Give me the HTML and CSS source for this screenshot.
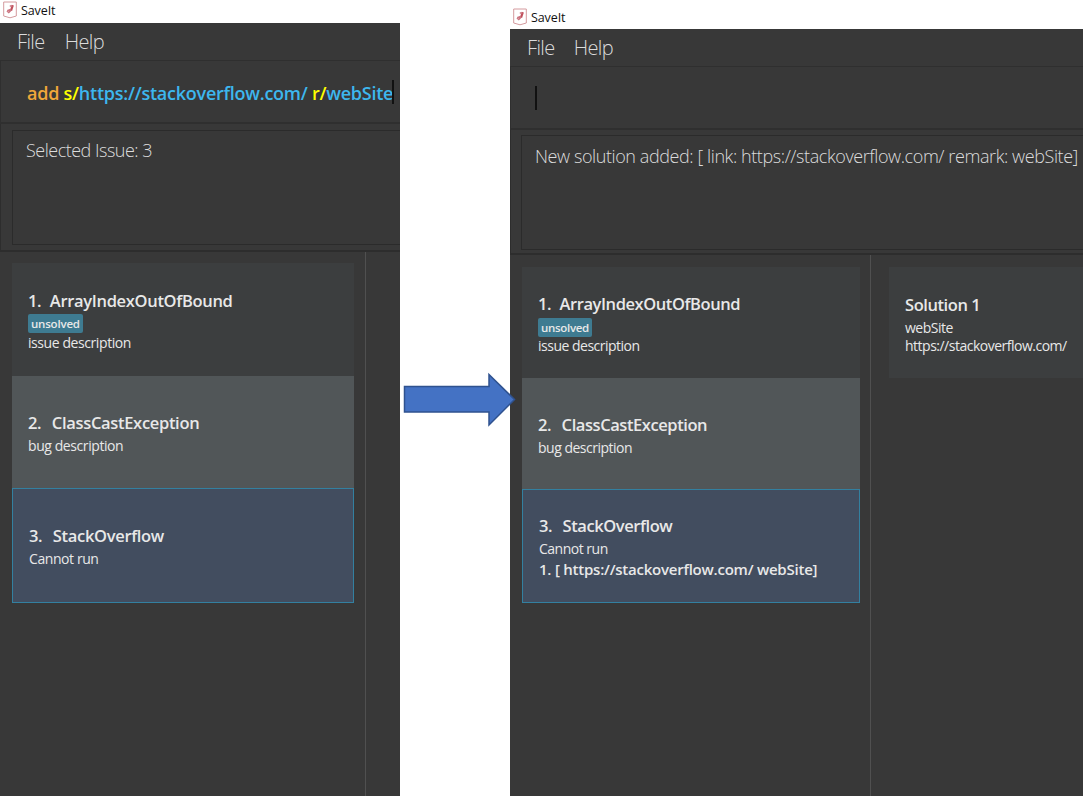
FILE: index.html
```html
<!DOCTYPE html>
<html lang="en">
<head>
<meta charset="utf-8">
<title>SaveIt</title>
<link rel="stylesheet" href="styles.css">
</head>
<body>
<main class="stage">
  <section class="window before">
    <header class="titlebar">
      <svg class="logo" width="14" height="18" viewBox="0 0 14 18"><path d="M.7 1h12.6v14L7 16.8.7 15z" fill="#fff" stroke="#d49a9e"/><path d="M9.8 4.2 8 9.6" fill="none" stroke="#c04f5b" stroke-width="2.2"/><path d="M8.2 9 5.8 11.4 4 9.8M6.8 5h2.6M4.2 9.8l3.4-1.2" fill="none" stroke="#cb7480" stroke-width="1.6"/></svg>
      <span class="app-name">SaveIt</span>
    </header>
    <nav class="menu"><span class="file">File</span><span class="help">Help</span></nav>
    <div class="command"><span class="input"><span class="word">add</span> <span class="prefix">s/</span><span class="arg">https://stackoverflow.com/</span> <span class="prefix">r/</span><span class="arg">webSite</span></span><i class="caret"></i></div>
    <div class="result"><div class="display"><span class="msg">Selected Issue: 3</span></div></div>
    <div class="content">
      <div class="issues">
        <article class="card first">
          <h2><span class="num">1.</span><span>ArrayIndexOutOfBound</span></h2>
          <span class="tag">unsolved</span>
          <p>issue description</p>
        </article>
        <article class="card even">
          <h2><span class="num">2.</span><span>ClassCastException</span></h2>
          <p>bug description</p>
        </article>
        <article class="card selected">
          <h2><span class="num">3.</span><span>StackOverflow</span></h2>
          <p>Cannot run</p>
        </article>
      </div>
      <div class="solutions"></div>
    </div>
  </section>

  <section class="window after">
    <header class="titlebar">
      <svg class="logo" width="14" height="18" viewBox="0 0 14 18"><path d="M.7 1h12.6v14L7 16.8.7 15z" fill="#fff" stroke="#d49a9e"/><path d="M9.8 4.2 8 9.6" fill="none" stroke="#c04f5b" stroke-width="2.2"/><path d="M8.2 9 5.8 11.4 4 9.8M6.8 5h2.6M4.2 9.8l3.4-1.2" fill="none" stroke="#cb7480" stroke-width="1.6"/></svg>
      <span class="app-name">SaveIt</span>
    </header>
    <nav class="menu"><span class="file">File</span><span class="help">Help</span></nav>
    <div class="command"><i class="caret"></i></div>
    <div class="result"><div class="display"><span class="msg">New solution added: [ link: https://stackoverflow.com/ remark: webSite]</span></div></div>
    <div class="content">
      <div class="issues">
        <article class="card first">
          <h2><span class="num">1.</span><span>ArrayIndexOutOfBound</span></h2>
          <span class="tag">unsolved</span>
          <p>issue description</p>
        </article>
        <article class="card even">
          <h2><span class="num">2.</span><span>ClassCastException</span></h2>
          <p>bug description</p>
        </article>
        <article class="card selected">
          <h2><span class="num">3.</span><span>StackOverflow</span></h2>
          <p>Cannot run</p>
          <p class="link">1. [ https://stackoverflow.com/ webSite]</p>
        </article>
      </div>
      <div class="solutions">
        <article class="card solution">
          <h2><span>Solution 1</span></h2>
          <p>webSite</p>
          <p>https://stackoverflow.com/</p>
        </article>
      </div>
    </div>
  </section>

  <svg class="arrow" width="114" height="56" viewBox="0 0 114 56"><path d="M1.5 14.5H86V2.5L111.5 27.5 86 53V40H1.5z" fill="#4472c4" stroke="#2f528f" stroke-width="1.5"/></svg>
</main>
</body>
</html>
```
FILE: styles.css
```css
* { box-sizing: border-box; }
body { margin: 0; background: #fff; font-family: "Open Sans", "Noto Sans", sans-serif; }
h2, p { margin: 0; }

.stage { position: relative; display: flex; gap: 110px; width: 1083px; height: 796px; overflow: hidden; }
.window { display: flex; flex-direction: column; height: 796px; white-space: nowrap; color: #e8e8e8; flex: none; }
.before { width: 400px; }
.after { width: 573px; }

.titlebar { display: flex; background: #fff; color: #111; font-size: 12.5px; line-height: 16px; letter-spacing: -.1px; padding-left: 3px; gap: 4px; flex: none; }
.before .titlebar { height: 23px; padding-top: 3px; }
.after .titlebar { height: 29px; padding-top: 10px; }
.logo { margin-top: -2px; }

.menu { display: flex; background: #383838; font-weight: 300; font-size: 20px; line-height: 37px; letter-spacing: -.6px; color: #dcdcdc; height: 37px; padding-left: 17px; gap: 20px; flex: none; }
.after .menu { gap: 19px; }

.command { display: flex; align-items: center; background: #383838; border: 2px solid #2f2f2f; border-width: 1px 0 2px 1px; height: 64px; padding: 1px 0 0 26px; flex: none; }
.after .command { padding-left: 24px; }
.input { font-weight: 600; font-size: 18px; letter-spacing: -.25px; padding-top: 1px; }
.word { color: #f0a73a; }
.prefix { color: #ff0; }
.arg { color: #3db7ee; }
.caret { width: 2px; height: 24px; background: #111; }
.before .caret { margin-left: -1px; }

.result { background: #383838; border: solid #2d2d2d; border-width: 0 0 2px 1px; padding: 6px 0 5px 11px; height: 128px; flex: none; }
.after .result { height: 125px; padding-top: 5px; padding-left: 10px; }
.display { border: 1px solid #2b2b2b; border-right: 0; height: 115px; padding: 7px 0 0 13px; font-weight: 300; font-size: 18px; line-height: 24px; letter-spacing: -.5px; color: #dcdcdc; }
.after .display { letter-spacing: -.41px; padding-top: 8px; }

.content { display: flex; background: #383838; flex: 1; }
.issues { border-right: 1px solid #505050; padding: 12px 0 0 12px; flex: none; }
.before .issues { width: 366px; padding-top: 11px; }
.after .issues { width: 361px; }
.solutions { flex: 1; padding: 12px 0 0 18px; }

.card { display: flex; flex-direction: column; align-items: flex-start; justify-content: center; background: #3c3e3f; padding: 2px 0 0 16px; height: 113px; }
.before .card { width: 342px; }
.after .card { width: 338px; height: 111px; padding-top: 4px; }
.card.even { background: #515658; }
.before .card.even { height: 112px; }
.card.selected { background: #424d5f; border: 1px solid #3380a0; height: 115px; }
.after .card.selected { height: 114px; }
.after .card.solution { width: 194px; }

h2 { display: flex; gap: 10px; font-weight: 600; font-size: 16.5px; line-height: 23px; letter-spacing: -.32px; margin-top: -1px; padding-bottom: 2px; }
.after h2 { letter-spacing: -.43px; margin-top: -2px; padding-bottom: 3px; }
.first .num { margin-right: -1.5px; }
.even .num, .selected .num { margin-right: .5px; }
p { font-size: 14px; line-height: 18px; letter-spacing: -.42px; }
.before p { padding-top: 1px; }
.after p { letter-spacing: -.5px; }
.tag { background: #3e7b91; border-radius: 2px; font-size: 11.5px; font-weight: 600; letter-spacing: -.2px; line-height: 19px; height: 19px; padding: 0 3px; }
.after .tag { letter-spacing: -.3px; }
.after .link { font-size: 15px; font-weight: 600; line-height: 23px; letter-spacing: -.23px; }

.arrow { position: absolute; left: 403px; top: 372px; }
```
